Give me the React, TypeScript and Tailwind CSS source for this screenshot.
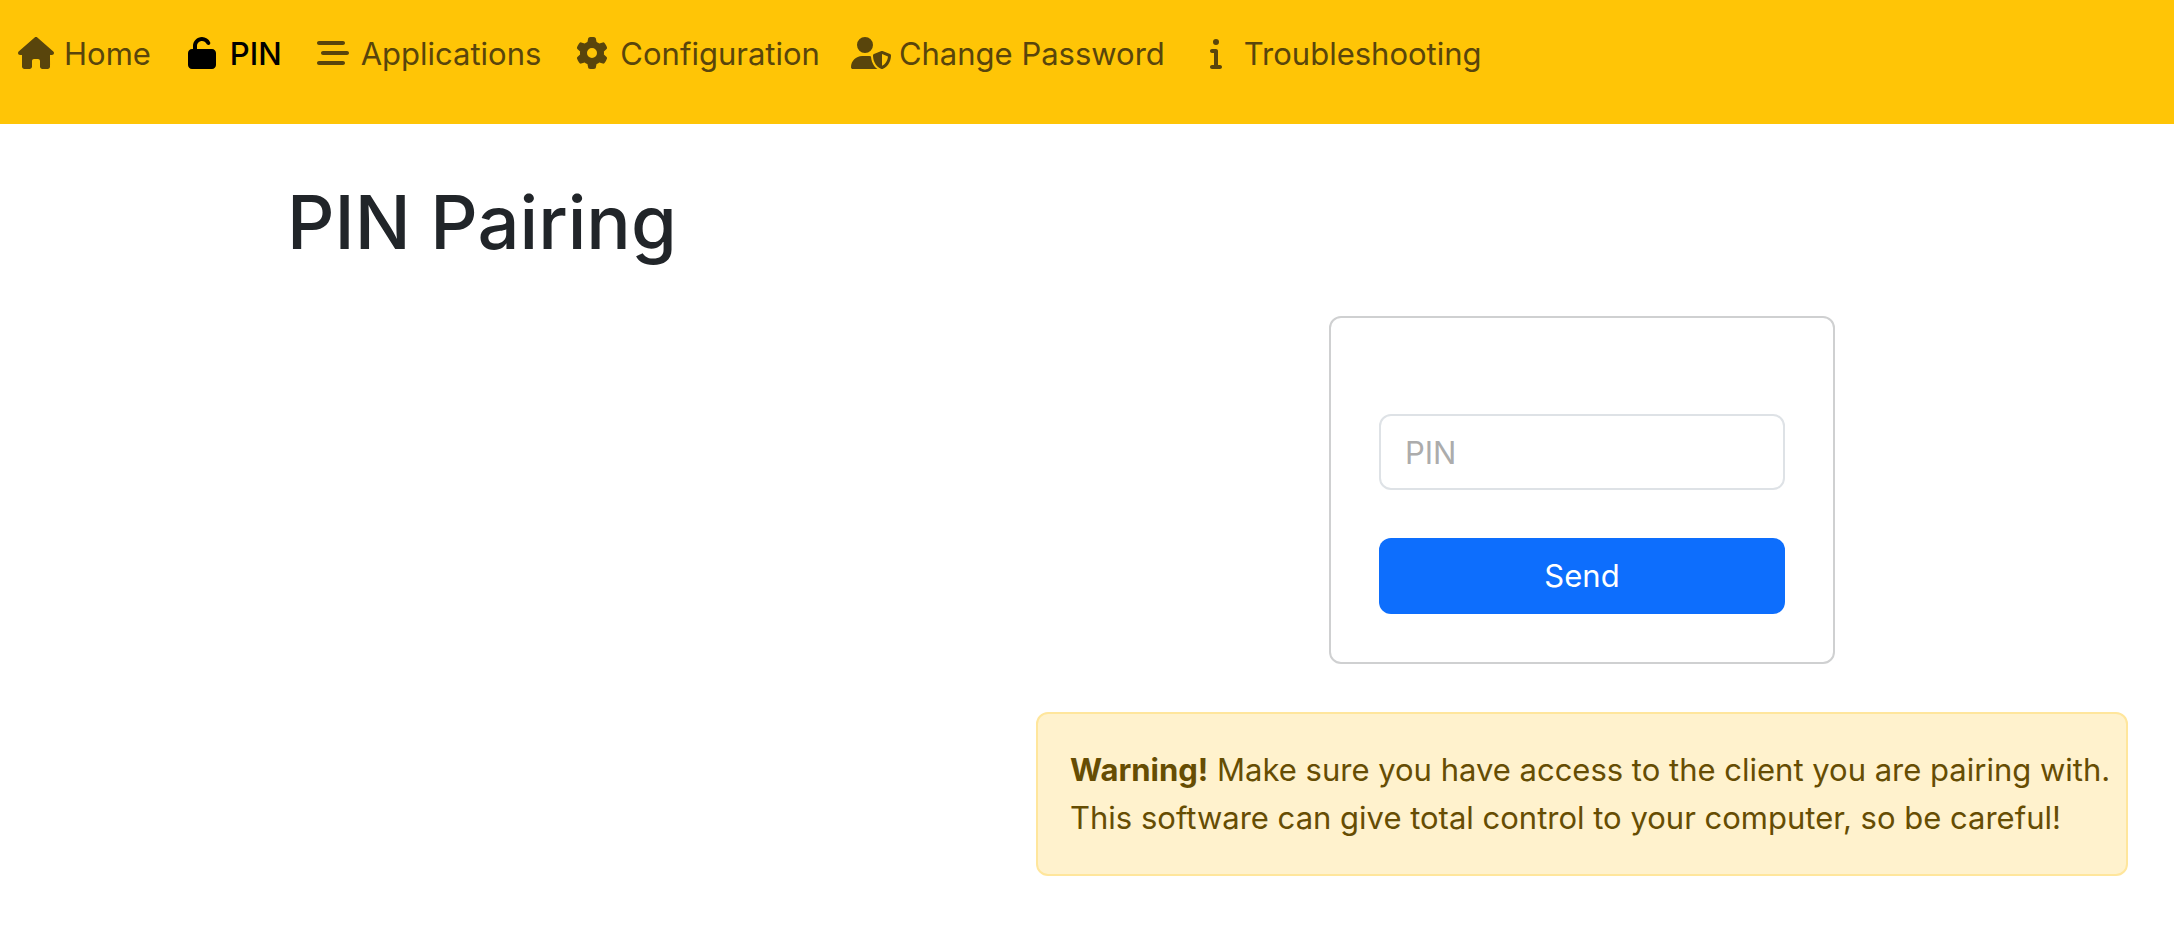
import { FaBarsStaggered, FaGear, FaHouse, FaInfo, FaUnlock, FaUserShield } from "react-icons/fa6";

const links = [
  { label: "Home", icon: <FaHouse className="h-8 w-9" /> },
  { label: "PIN", icon: <FaUnlock className="size-8" />, active: true },
  { label: "Applications", icon: <FaBarsStaggered className="size-8" /> },
  { label: "Configuration", icon: <FaGear className="size-8" /> },
  { label: "Change Password", icon: <FaUserShield className="h-8 w-10" /> },
  { label: "Troubleshooting", icon: <FaInfo className="size-8" /> },
];

export default function App() {
  return (
    <div className="font-[Inter,'Liberation_Sans',sans-serif] text-[31px] leading-[48px] text-[#212529]">
      <nav className="flex flex-wrap gap-x-[31px] bg-[#ffc506] px-4 pt-[30px] pb-[46px]">
        {links.map((link) => (
          <a
            key={link.label}
            href="#"
            className={
              link.active
                ? "flex items-center gap-2 font-medium text-black"
                : "flex items-center gap-2 text-[#59450c]"
            }
          >
            <span className="flex w-10 justify-center pb-0.5">{link.icon}</span>
            {link.label}
          </a>
        ))}
      </nav>
      <main className="pb-12">
        <h1 className="mx-auto max-w-[1600px] pt-[50px] text-[74px] leading-[96px] font-medium">
          PIN Pairing
        </h1>
        <div className="mt-[46px] flex justify-end pr-[46px]">
          <div className="flex w-[1092px] max-w-full flex-col items-center gap-12">
            <form className="flex w-[506px] max-w-full flex-col gap-12 rounded-xl border-2 border-[#cfd0d1] px-12 pt-24 pb-12">
              <input
                type="text"
                aria-label="PIN"
                placeholder="PIN"
                className="h-19 rounded-xl border-2 border-[#dee2e6] px-6 placeholder:text-[#acacac]"
              />
              <button type="button" className="h-19 rounded-xl bg-[#0d6efd] text-white">
                Send
              </button>
            </form>
            <div
              role="alert"
              className="w-full rounded-xl border-2 border-[#ffe69c] bg-[#fff2cd] pt-8 pr-2 pb-8 pl-8 text-[#664d03]"
            >
              <p>
                <b>Warning!</b> Make sure you have access to the client you are pairing with.
              </p>
              <p>This software can give total control to your computer, so be careful!</p>
            </div>
          </div>
        </div>
      </main>
    </div>
  );
}
